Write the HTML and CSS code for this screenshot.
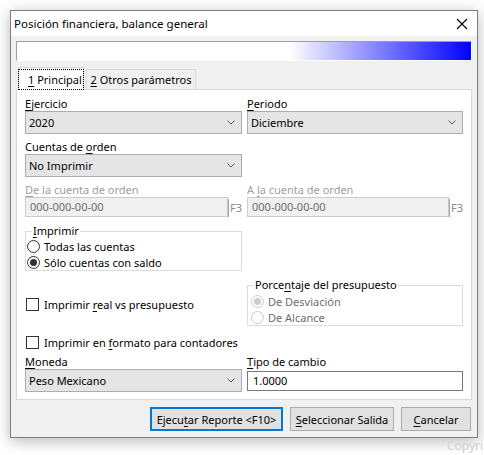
FILE: index.html
```html
<!DOCTYPE html>
<html lang="es">
<head>
<meta charset="utf-8">
<title>Posición financiera, balance general</title>
<link rel="stylesheet" href="styles.css">
</head>
<body>
<div class="window">
  <div class="titlebar">
    <span class="title">Posición financiera, balance general</span>
    <svg class="close" width="12" height="12" viewBox="0 0 12 12"><path d="M1 1L11 11M11 1L1 11" stroke="#000" stroke-width="1.1" fill="none"/></svg>
  </div>
  <div class="client">
    <div class="gradbar"></div>
    <div class="tabs">
      <div class="tab active"><span class="focusrect"><u>1</u> Principal</span></div>
      <div class="tab"><span><u>2</u> Otros parámetros</span></div>
    </div>
    <div class="panel">
      <div class="row r1">
        <div class="field">
          <div class="lbl"><u>E</u>jercicio</div>
          <div class="combo"><span>2020</span><svg class="chev" width="8" height="5" viewBox="0 0 8 5"><path d="M0.5 0.5L4 4L7.5 0.5" stroke="#5a5a5a" fill="none"/></svg></div>
        </div>
        <div class="field">
          <div class="lbl"><u>P</u>eriodo</div>
          <div class="combo"><span>Diciembre</span><svg class="chev" width="8" height="5" viewBox="0 0 8 5"><path d="M0.5 0.5L4 4L7.5 0.5" stroke="#5a5a5a" fill="none"/></svg></div>
        </div>
      </div>
      <div class="row r2">
        <div class="field">
          <div class="lbl">Cuentas de <u>o</u>rden</div>
          <div class="combo"><span>No Imprimir</span><svg class="chev" width="8" height="5" viewBox="0 0 8 5"><path d="M0.5 0.5L4 4L7.5 0.5" stroke="#5a5a5a" fill="none"/></svg></div>
        </div>
      </div>
      <div class="row r3">
        <div class="field">
          <div class="lbl disabled"><u>D</u>e la cuenta de orden</div>
          <div class="inrow"><div class="dinput">000-000-00-00</div><div class="f3">F3</div></div>
        </div>
        <div class="field">
          <div class="lbl disabled">A <u>l</u>a cuenta de orden</div>
          <div class="inrow"><div class="dinput">000-000-00-00</div><div class="f3">F3</div></div>
        </div>
      </div>
      <div class="row r4">
        <fieldset class="group">
          <legend><u>I</u>mprimir</legend>
          <div class="opt"><span class="radio"></span><span>Todas las cuentas</span></div>
          <div class="opt"><span class="radio on"></span><span>Sólo cuentas con saldo</span></div>
        </fieldset>
      </div>
      <div class="row r5">
        <div class="opt chk1"><span class="check"></span><span>Imprimir <u>r</u>eal vs presupuesto</span></div>
        <fieldset class="group grp2">
          <legend>Porce<u>n</u>taje del presupuesto</legend>
          <div class="opt dis"><span class="radio on"></span><span>De Desviación</span></div>
          <div class="opt dis"><span class="radio"></span><span>De Alcance</span></div>
        </fieldset>
      </div>
      <div class="row r6">
        <div class="opt"><span class="check"></span><span>Imprimir en <u>f</u>ormato para contadores</span></div>
      </div>
      <div class="row r7">
        <div class="field">
          <div class="lbl"><u>M</u>oneda</div>
          <div class="combo"><span>Peso Mexicano</span><svg class="chev" width="8" height="5" viewBox="0 0 8 5"><path d="M0.5 0.5L4 4L7.5 0.5" stroke="#5a5a5a" fill="none"/></svg></div>
        </div>
        <div class="field">
          <div class="lbl"><u>T</u>ipo de cambio</div>
          <div class="tinput">1.0000</div>
        </div>
      </div>
    </div>
    <div class="buttons">
      <div class="btn default"><span>Ejecu<u>t</u>ar Reporte &lt;F10&gt;</span></div>
      <div class="btn sel"><span><u>S</u>eleccionar Salida</span></div>
      <div class="btn cancel"><span><u>C</u>ancelar</span></div>
    </div>
  </div>
</div>
<div class="behind">
  <div class="copy">Copyri</div>
</div>
</body>
</html>
```

FILE: styles.css
```css
html, body {
  margin: 0;
  padding: 0;
  background: #ffffff;
  overflow: hidden;
  height: 455px;
}
body {
  font-family: "Noto Sans", "DejaVu Sans", sans-serif;
  font-size: 11px;
  line-height: 15px;
  color: #000;
}
u { text-decoration: underline; text-underline-offset: 2px; }

.window {
  margin: 10px 0 0 10px;
  width: 468px;
  height: 428px;
  box-sizing: border-box;
  border: 1px solid #7e7e7e;
  background: #f0f0f0;
  box-shadow: 0 3px 14px rgba(0,0,0,0.28);
  display: flex;
  flex-direction: column;
}
.titlebar {
  height: 25px;
  background: #fff;
  display: flex;
  align-items: center;
  justify-content: space-between;
  padding: 0 9px 0 3px;
  flex-shrink: 0;
}
.title { font-size: 11.5px; }
.close { display: block; }

.client {
  padding: 5px 5px 0 5px;
  display: flex;
  flex-direction: column;
}
.gradbar {
  height: 20px;
  box-sizing: border-box;
  border-top: 1px solid #a0a0a0;
  border-left: 1px solid #a0a0a0;
  border-right: 1px solid #fff;
  border-bottom: 1px solid #fff;
  background: linear-gradient(to right, #ffffff 0%, #ffffff 60%, #0000ff 100%);
}
.tabs {
  margin-top: 6px;
  height: 22px;
  display: flex;
  align-items: flex-end;
  padding-left: 2px;
}
.tab {
  box-sizing: border-box;
  height: 20px;
  border: 1px solid #d9d9d9;
  border-bottom: none;
  background: #f0f0f0;
  display: flex;
  align-items: center;
  justify-content: center;
  margin-left: 2px;
  width: 110px;
  white-space: nowrap;
}
.tab.active {
  height: 23px;
  margin-bottom: -1px;
  background: #fff;
  position: relative;
  z-index: 1;
  margin-left: 0;
  width: 66px;
  padding: 1px 0 0 0;
}
.focusrect {
  outline: 1px dotted #000;
  display: block;
  width: 64px;
  height: 19px;
  box-sizing: border-box;
  padding: 2px 0 0 9px;
  text-align: left;
  line-height: 15px;
}

.panel {
  background: #fff;
  border: 1px solid #d9d9d9;
  padding: 0 8px 7px 8px;
  display: flex;
  flex-direction: column;
}
.row {
  display: grid;
  grid-template-columns: 217px 216px;
  column-gap: 5px;
}
.r1 { margin-top: 6px; }
.r2 { margin-top: 5px; }
.r3 { margin-top: 5px; }
.r4 { margin-top: 7px; }
.r5 { margin-top: 7px; }
.r6 { margin-top: 8px; }
.r7 { margin-top: 4px; }

.lbl { height: 15px; line-height: 15px; white-space: nowrap; }
.lbl.disabled { color: #a0a0a0; }

.combo {
  height: 23px;
  box-sizing: border-box;
  border: 1px solid #adadad;
  background: #e5e5e5;
  display: flex;
  align-items: center;
  justify-content: space-between;
  padding: 0 6px 0 3px;
}
.chev { display: block; }

.inrow { display: flex; }
.dinput {
  flex: 1;
  height: 20px;
  box-sizing: border-box;
  border: 1px solid #cccccc;
  background: #f0f0f0;
  color: #6d6d6d;
  padding: 0 0 0 4px;
  line-height: 18px;
}
.f3 {
  width: 14px;
  height: 18px;
  margin-top: 2px;
  box-sizing: border-box;
  border-left: 1px solid #a0a0a0;
  color: #8a8a8a;
  line-height: 17px;
  padding-left: 1px;
}

.group {
  margin: 0;
  padding: 0;
  border: 1px solid #dcdcdc;
  min-width: 0;
}
.group legend {
  padding: 0 1px;
  margin-left: 6px;
  line-height: 14px;
  height: 14px;
}
.grp2 { padding-top: 1px; }
.grp2 .opt { padding-left: 3px; }
.opt {
  height: 16px;
  display: flex;
  align-items: center;
  white-space: nowrap;
  padding-left: 1px;
}
.radio {
  width: 13px;
  height: 13px;
  box-sizing: border-box;
  border: 1px solid #333;
  border-radius: 50%;
  background: #fff;
  margin-right: 4px;
  display: flex;
  align-items: center;
  justify-content: center;
  flex-shrink: 0;
}
.radio.on::after {
  content: "";
  width: 7px;
  height: 7px;
  border-radius: 50%;
  background: #333;
}
.opt.dis { color: #6d6d6d; }
.opt.dis .radio { border-color: #cccccc; }
.opt.dis .radio.on::after { background: #cccccc; }
.check {
  width: 13px;
  height: 13px;
  box-sizing: border-box;
  border: 1px solid #333;
  background: #fff;
  margin-right: 5px;
  flex-shrink: 0;
}
.chk1 { margin-top: 18px; }

.tinput {
  margin-top: 2px;
  height: 20px;
  box-sizing: border-box;
  border: 1px solid #7a7a7a;
  background: #fff;
  padding-left: 5px;
  line-height: 18px;
}

.buttons {
  margin-top: 7px;
  display: flex;
  justify-content: flex-end;
  gap: 7px;
  padding-right: 1px;
}
.btn {
  height: 24px;
  box-sizing: border-box;
  border: 1px solid #adadad;
  background: #e1e1e1;
  display: flex;
  align-items: center;
  justify-content: center;
  white-space: nowrap;
}
.btn.default { border: 2px solid #0078d7; width: 133px; }
.btn.sel { width: 104px; }
.btn.cancel { width: 70px; }

.behind {
  color: #d2d2d2;
  font-size: 12px;
  line-height: 12px;
  white-space: nowrap;
}
.copy { margin-left: 447px; margin-top: 2px; }
```
